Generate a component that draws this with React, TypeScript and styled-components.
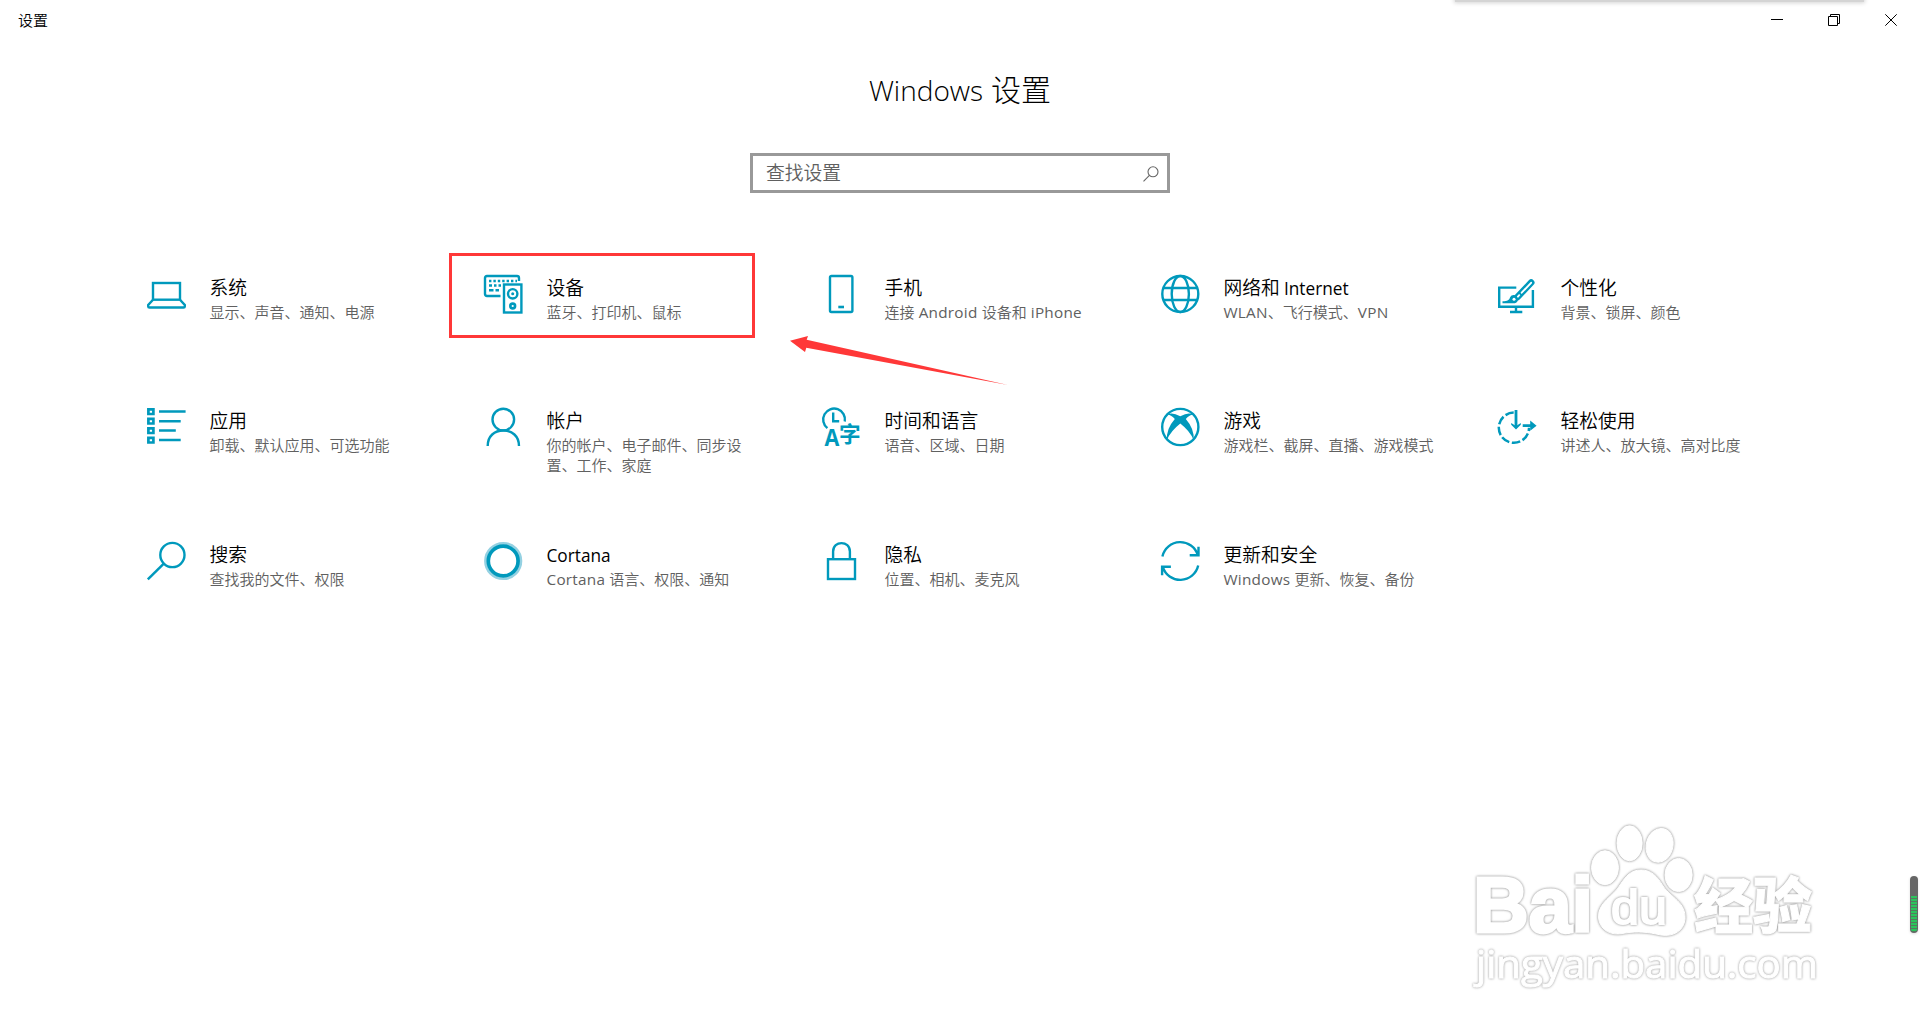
import React from "react";
import styled, {createGlobalStyle} from "styled-components";

const GlobalStyle = createGlobalStyle`
    * {
        box-sizing: border-box;
    }

    body {
        margin: 0;
        background: #fff;
        color: #000;
        font-family: "Noto Sans CJK SC", sans-serif;
        overflow: hidden;
    }
`

// has to stand above the icons, they are built when the module loads
const Glyph = styled.text`
    fill: #0099bc;
    stroke: none;
    font-family: "Open Sans", "Noto Sans CJK SC", sans-serif;
    font-weight: 700;
`

const icons: Record<string, React.ReactNode> = {
    system: <>
        <rect x="6" y="8" width="27" height="16.7"/>
        <path d="M6 24.7 L1.2 30 V31.5 Q1.2 32.5 2.5 32.5 H36.5 Q37.8 32.5 37.8 31.5 V30 L33 24.7"/>
    </>,
    devices: <>
        <path d="M16.5 21 H3 Q1 21 1 19 V3 Q1 1 3 1 H33 Q35 1 35 3 V6"/>
        <path d="M5 6 H33" strokeDasharray="2.4 2"/>
        <path d="M5 10.5 H8 M10 10.5 H12.5 M14.5 10.5 H17 M5 15.3 H9.5 M11.5 15.3 H15"/>
        <rect x="20" y="9.5" width="17.4" height="28"/>
        <circle cx="28.7" cy="18.8" r="4.7"/>
        <circle cx="28.7" cy="18.8" r="1.5" fill="#0099bc" stroke="none"/>
        <circle cx="28.7" cy="31" r="2.4" strokeWidth="2.6"/>
    </>,
    phone: <>
        <rect x="8" y="1" width="22.4" height="36" rx="1.4"/>
        <path d="M16.3 32 H22" strokeWidth="2.6"/>
    </>,
    network: <>
        <circle cx="19.3" cy="19" r="18"/>
        <ellipse cx="19.3" cy="19" rx="8.6" ry="18"/>
        <path d="M2.3 13 H36.3 M2.3 25 H36.3"/>
    </>,
    personal: <>
        <path d="M18.3 12.6 H1.2 V31.8 H34.9 V15"/>
        <path d="M18 32 V37 M12 37 H24.3"/>
        <path d="M33.2 7.6 L19.5 22" strokeWidth="6.6" strokeLinecap="round"/>
        <path d="M33.1 7.8 L23.7 17.7 M21.2 20.2 L19.7 21.8" stroke="#fff" strokeWidth="1.9" strokeLinecap="round"/>
        <path d="M4.5 28.3 V26.3 C10 26.3 11 25 12 22.5 C13.3 19.2 17 19.3 18.8 21.4 C21.5 24.5 19.5 28.3 15.5 28.3 Z" fill="#0099bc" stroke="none"/>
        <circle cx="16" cy="24.2" r="1.5" fill="#fff" stroke="none"/>
    </>,
    apps: <>
        <path d="M1.4 1.4 H6.4 V6 H1.4 Z M1.4 10.9 H6.4 V15.5 H1.4 Z M1.4 20.4 H6.4 V25 H1.4 Z M1.4 29.9 H6.4 V34.5 H1.4 Z" strokeWidth="2.7"/>
        <path d="M12 3.6 H38.6 M12 13.2 H33.7 M12 22.6 H28.8 M12 32.1 H33.7" strokeWidth="2.5"/>
    </>,
    accounts: <>
        <circle cx="19.3" cy="11.6" r="10.8"/>
        <path d="M3.7 38 C3.7 28 10.5 22.5 19.3 22.5 C28 22.5 35 28 35 38"/>
    </>,
    time: <>
        <path d="M5.4 20.1 A10.9 10.9 0 1 1 22.8 13.5"/>
        <path d="M11.2 4.6 V13.3 H17.2" strokeWidth="2.4"/>
        <Glyph x="2.4" y="38" fontSize="22.5" textLength="14.8" lengthAdjust="spacingAndGlyphs">A</Glyph>
        <Glyph x="17.1" y="33.5" fontSize="21.6">字</Glyph>
    </>,
    gaming: <>
        <circle cx="19.3" cy="19" r="18.1"/>
        <path d="M6.5 6.8 Q10.5 3.4 19.3 8.2 Q28.1 3.4 32.1 6.8 Q28 7 24.8 11 Q33.6 21 32.6 32 Q29 23.2 19.3 15.6 Q9.6 23.2 6 32 Q5 21 13.8 11 Q10.6 7 6.5 6.8 Z" fill="#0099bc" stroke="none"/>
    </>,
    ease: <>
        <path d="M15.7 4.6 A15.1 15.1 0 1 0 31 19.7" strokeWidth="2.5" strokeDasharray="8.6 2.6"/>
        <path d="M18 2 V18 M24.7 17.7 H35" strokeWidth="2.8"/>
        <path d="M13.2 14.9 L18 18 L22.8 14.9 V16.8 L18 21.6 L13.2 16.8 Z M32.2 12.6 L38.6 17.7 L32.2 22.8 Z" fill="#0099bc" stroke="none"/>
    </>,
    search: <>
        <circle cx="25.4" cy="13" r="12.1"/>
        <path d="M16.8 21.6 L.8 37.4" strokeWidth="2.5"/>
    </>,
    cortana: <>
        <circle cx="19.2" cy="19" r="17.7" stroke="#94d1e2" strokeWidth="2.8"/>
        <circle cx="19.2" cy="19" r="14.9" strokeWidth="3.7"/>
    </>,
    privacy: <>
        <rect x="6" y="17.2" width="27" height="19.8"/>
        <path d="M11.1 17 V9.5 C11.1 -1.7 27.9 -1.7 27.9 9.5 V17"/>
    </>,
    update: <>
        <path d="M1.4 14.4 A18.3 18.3 0 0 1 36.8 13.2 M37.5 4.7 V13.3 H28.7"/>
        <path d="M37.2 23.6 A18.3 18.3 0 0 1 1.8 24.8 M1.1 33.3 V24.7 H9.9"/>
    </>,
}

const tiles = [
    {icon: "system", title: "系统", text: "显示、声音、通知、电源"},
    {icon: "devices", title: "设备", text: "蓝牙、打印机、鼠标"},
    {icon: "phone", title: "手机", text: "连接 Android 设备和 iPhone"},
    {icon: "network", title: "网络和 Internet", text: "WLAN、飞行模式、VPN"},
    {icon: "personal", title: "个性化", text: "背景、锁屏、颜色"},
    {icon: "apps", title: "应用", text: "卸载、默认应用、可选功能"},
    {icon: "accounts", title: "帐户", text: "你的帐户、电子邮件、同步设置、工作、家庭"},
    {icon: "time", title: "时间和语言", text: "语音、区域、日期"},
    {icon: "gaming", title: "游戏", text: "游戏栏、截屏、直播、游戏模式"},
    {icon: "ease", title: "轻松使用", text: "讲述人、放大镜、高对比度"},
    {icon: "search", title: "搜索", text: "查找我的文件、权限"},
    {icon: "cortana", title: "Cortana", text: "Cortana 语言、权限、通知"},
    {icon: "privacy", title: "隐私", text: "位置、相机、麦克风"},
    {icon: "update", title: "更新和安全", text: "Windows 更新、恢复、备份"},
]

// latin words get their own face next to the chinese text
const mixed = (text: string) => text
    .split(/([A-Za-z]+)/)
    .map((part, i) => i % 2 ? <Latin key={i}>{part}</Latin> : part);

const App = () => {
    return <Window>
        <GlobalStyle/>
        <TopShadow/>
        <TitleBar>
            <span>设置</span>
            <Controls>
                <svg width="12" height="12"><path d="M0 5.5 H12"/></svg>
                <svg width="12" height="12"><path d="M.5 2.5 H9.5 V11.5 H.5 Z M2.5 2.5 V.5 H11.5 V9.5 H9.5"/></svg>
                <svg width="12" height="12"><path d="M.3 .3 L11.7 11.7 M11.7 .3 L.3 11.7"/></svg>
            </Controls>
        </TitleBar>
        <Heading><HeadingLatin>Windows</HeadingLatin>设置</Heading>
        <SearchBox>
            <span>查找设置</span>
            <svg width="16" height="16" fill="none" stroke="#666" strokeWidth="1.1">
                <circle cx="10" cy="5.8" r="5"/>
                <path d="M6.4 9.4 L.5 15.3"/>
            </svg>
        </SearchBox>
        <Tiles>
            {tiles.map(tile => <Tile key={tile.icon}>
                <TileIcon viewBox="0 0 39 39">{icons[tile.icon]}</TileIcon>
                <div>
                    <TileTitle>{mixed(tile.title)}</TileTitle>
                    <TileText>{mixed(tile.text)}</TileText>
                </div>
            </Tile>)}
        </Tiles>
        <Highlight/>
        <Arrow viewBox="0 0 220 50">
            <path d="M0 4.7 L18 0 L16.7 3.7 L218 49 L16.3 11.7 L15 16 Z"/>
        </Arrow>
        <Watermark viewBox="0 0 360 180">
            <Logo>
                <text x="-2" y="112" fontSize="78" fontWeight="700" textLength="120" lengthAdjust="spacingAndGlyphs" strokeWidth="3">Bai</text>
                <ellipse cx="130" cy="47.7" rx="13.5" ry="17"/>
                <ellipse cx="154.6" cy="23.3" rx="12.6" ry="17.5"/>
                <ellipse cx="184.6" cy="25.3" rx="13.3" ry="17" transform="rotate(14 184.6 25.3)"/>
                <ellipse cx="203.6" cy="55" rx="13.6" ry="16.6"/>
                <path d="M166 50 C176 50 182 56 188 66 C196 78 211 82 210 99 C209 111 198 117 186 115 C172 112 164 111 150 113 C134 117 124 108 123.500 97 C123 82 139 76 145 65 C151 56 156 50 166 50 Z"/>
            </Logo>
            <Logo>
                <text x="136" y="104" fontSize="48" textLength="56" lengthAdjust="spacingAndGlyphs" strokeWidth="2">du</text>
            </Logo>
            <Logo>
                <LogoCjk x="219" y="108" fontSize="60" textLength="118" lengthAdjust="spacingAndGlyphs">经验</LogoCjk>
            </Logo>
            <Address x="1" y="158" fontSize="39" textLength="342" lengthAdjust="spacingAndGlyphs">jingyan.baidu.com</Address>
        </Watermark>
        <Meter><MeterLevel/></Meter>
    </Window>
}

export default App;

const Window = styled.div`
    position: relative;
    display: flex;
    flex-direction: column;
    align-items: center;
    width: 1920px;
    height: 1030px;
    background: #fff;
    overflow: hidden;
`

const TopShadow = styled.div`
    position: absolute;
    top: -10px;
    left: 1455px;
    width: 409px;
    height: 12px;
    background: #d4d4d4;
    box-shadow: 0 0 4px 1px #d4d4d4;
`

const TitleBar = styled.header`
    display: flex;
    justify-content: space-between;
    width: 100%;
    height: 40px;
    padding: 0 23px 0 18px;
    font-size: 15px;
    font-weight: 350;
    line-height: 40px;
`

const Controls = styled.div`
    display: flex;
    gap: 45px;
    padding-top: 14px;

    & svg {
        fill: none;
        stroke: #000;
    }
`

const Latin = styled.span`
    font-family: "Open Sans", sans-serif;
    font-size: .92em;
    font-weight: 400;
    line-height: 1;
`

const Heading = styled.h1`
    margin: 27px 0 0;
    height: 46px;
    font-size: 30px;
    font-weight: 300;
    line-height: 43px;
`

const HeadingLatin = styled.span`
    margin-right: 8px;
    font-family: "Open Sans", sans-serif;
    font-size: 28px;
    line-height: 1;
`

const SearchBox = styled.div`
    display: flex;
    align-items: center;
    justify-content: space-between;
    width: 420px;
    height: 40px;
    margin-top: 40px;
    padding: 0 8px 0 13px;
    border: solid 3px #999;
    color: #606060;
    font-size: 18.75px;
    font-weight: 350;
    line-height: 32px;

    & span {
        padding-bottom: 2px;
    }

    & svg {
        margin-top: 1px;
    }
`

const Tiles = styled.main`
    display: grid;
    grid-template-columns: 337px 338px 339px 337px 340px;
    grid-template-rows: 133px 134px 134px;
    width: 100%;
    margin-top: 82px;
    padding-left: 147px;
`

const Tile = styled.div`
    display: flex;
    gap: 23.5px;
`

const TileIcon = styled.svg`
    flex: none;
    width: 39px;
    height: 39px;
    fill: none;
    stroke: #0099bc;
    stroke-width: 2.4;
    overflow: visible;
`

const TileTitle = styled.div`
    height: 27px;
    font-size: 18.75px;
    font-weight: 350;
    line-height: 23px;
`

const TileText = styled.div`
    width: 214px;
    color: #606060;
    font-size: 15px;
    font-weight: 350;
    line-height: 20px;
    word-spacing: .8px;

    & ${Latin} {
        font-size: 1.02em;
        letter-spacing: .25px;
    }
`

const Highlight = styled.div`
    position: absolute;
    top: 253px;
    left: 449px;
    width: 306px;
    height: 85px;
    border: solid 3px #ff3838;
`

const Arrow = styled.svg`
    position: absolute;
    top: 336px;
    left: 790px;
    width: 220px;
    height: 50px;
    fill: #ff3838;
`

const Watermark = styled.svg`
    position: absolute;
    top: 820px;
    left: 1475px;
    width: 360px;
    height: 180px;
    fill: #fff;
    font-family: "Liberation Sans", sans-serif;
    overflow: visible;
`

const Logo = styled.g`
    stroke: #fff;
    stroke-width: 1;
    filter: drop-shadow(0 0 1px #999) drop-shadow(0 0 1px #ddd);
`

const LogoCjk = styled.text`
    font-family: "Noto Sans CJK SC", sans-serif;
    font-weight: 900;
    stroke-width: 1;
`

const Address = styled.text`
    font-family: "Open Sans", sans-serif;
    stroke: #fff;
    stroke-width: 1;
    filter: drop-shadow(0 0 1px #aaa) drop-shadow(0 0 1px #e4e4e4);
`

const Meter = styled.div`
    position: absolute;
    top: 876px;
    left: 1910px;
    width: 8px;
    height: 57px;
    padding: 20px 1px 1px;
    border-radius: 4px;
    background: #666;
    box-shadow: 0 1px 3px #ddd;
`

const MeterLevel = styled.div`
    height: 36px;
    border-radius: 0 0 3px 3px;
    background: repeating-linear-gradient(#2bc45c 0 2px, #55795f 2px 3px);
`
